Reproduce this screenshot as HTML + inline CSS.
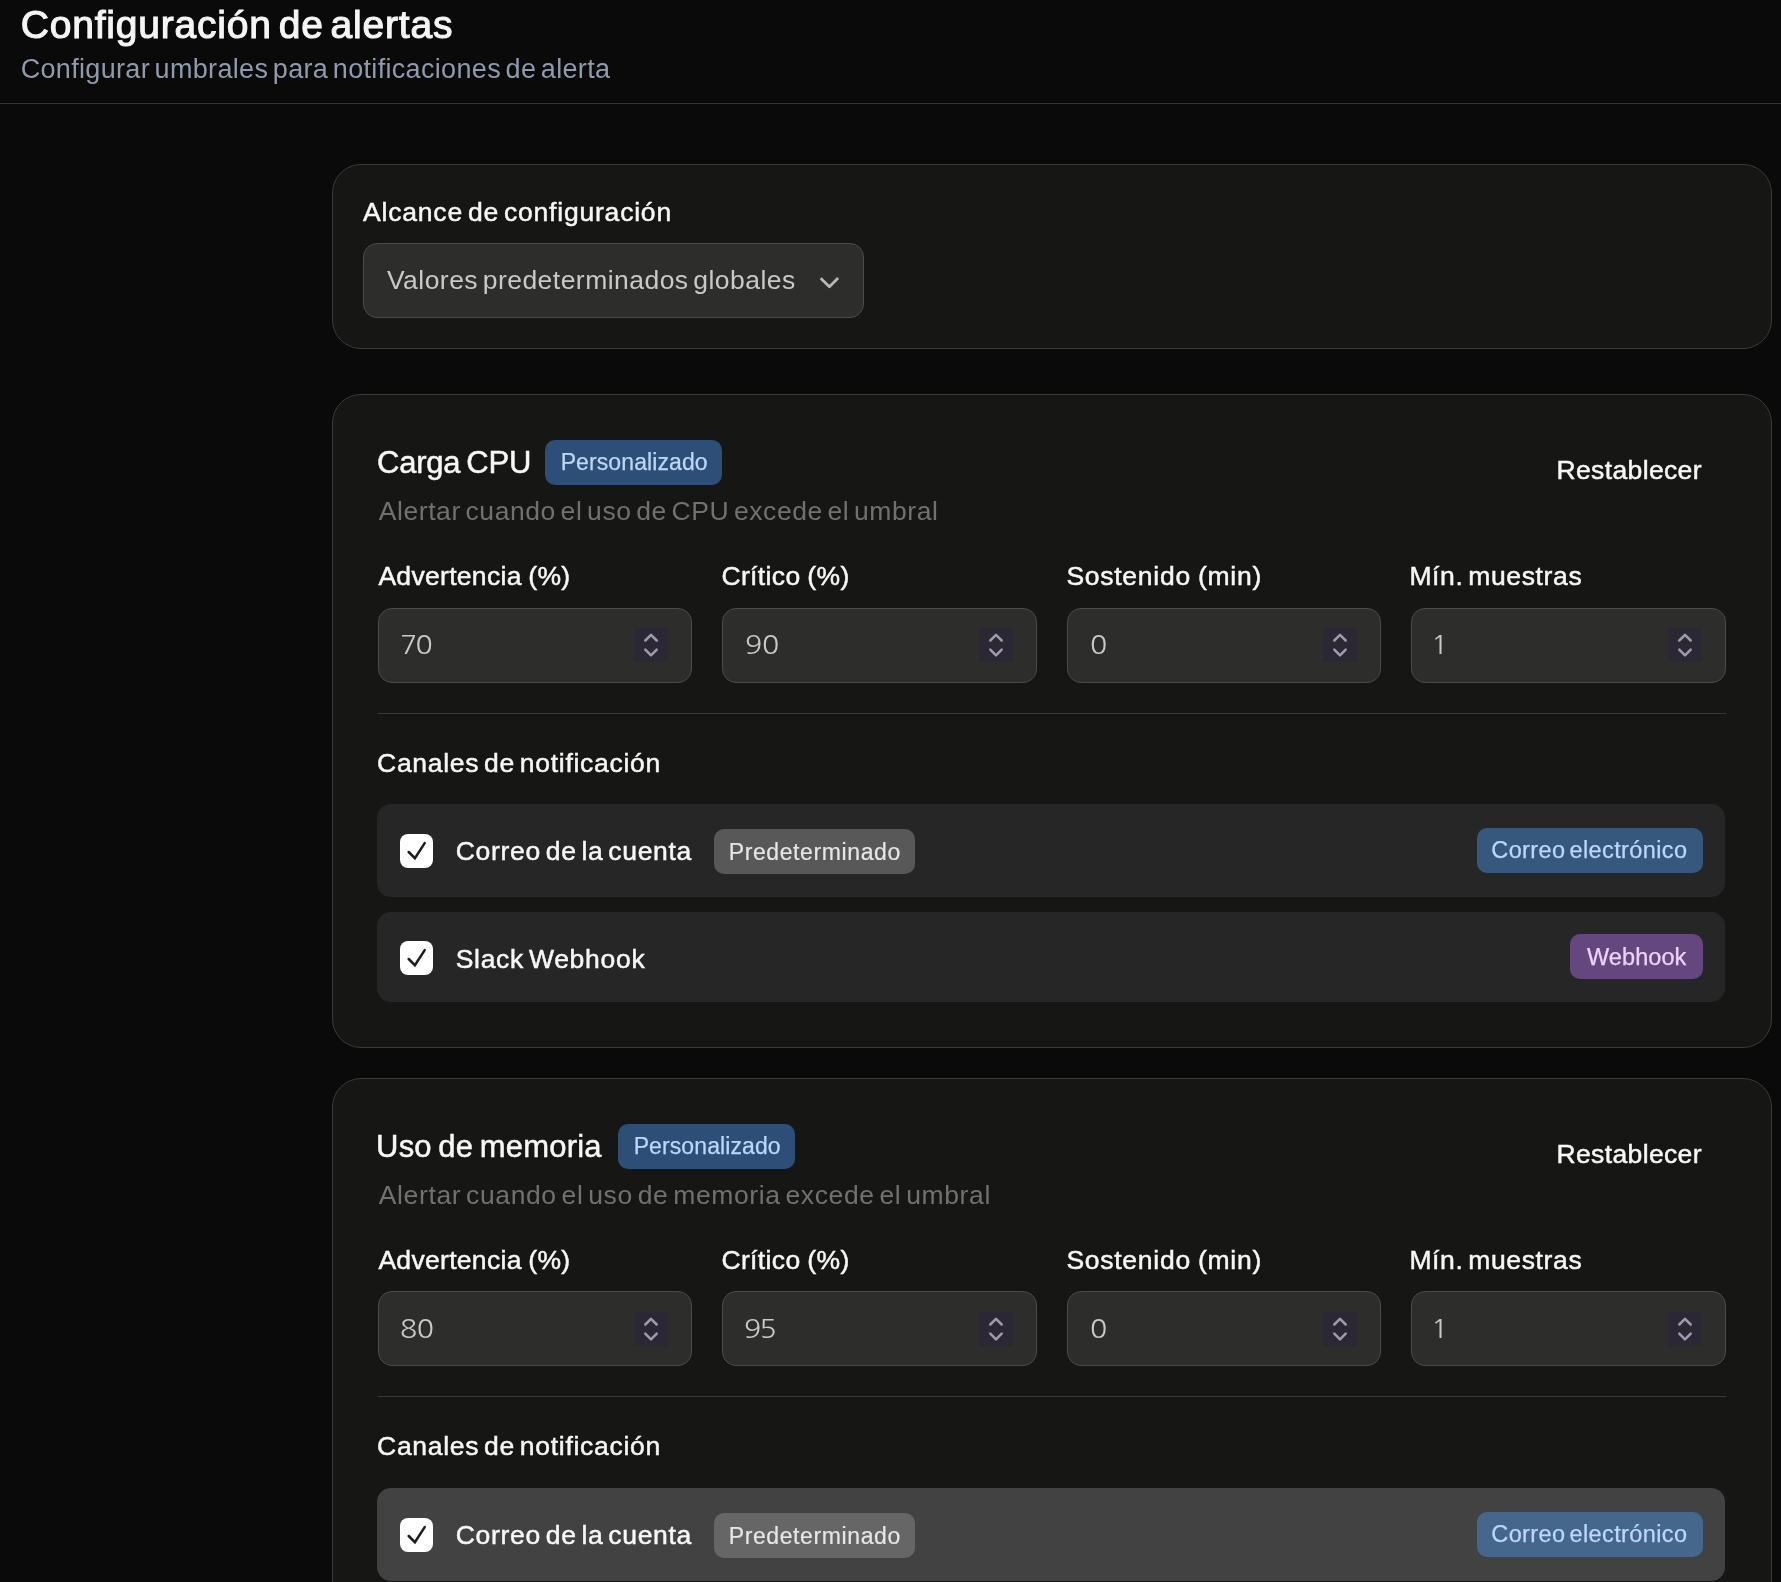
<!DOCTYPE html><html lang="es"><head><meta charset="utf-8"><title>Configuración de alertas</title><style>
*{box-sizing:border-box;margin:0;padding:0}
html,body{width:1781px;height:1582px;overflow:hidden;background:#0a0a0a;font-family:"Liberation Sans", sans-serif;}
body{position:relative}
#app{left:0;top:0;width:1781px;height:1582px;will-change:transform;overflow:hidden}
.t{position:absolute;display:block;line-height:1;white-space:nowrap;font-weight:normal;font-style:normal}
div{position:absolute}
.hdr{left:0;top:0;width:1781px;height:104px;border-bottom:1px solid #333332;background:#0a0a0a}
.card{background:#161614;border:1px solid #3a3a36;border-radius:29px}
.field{background:#2d2d2b;border:1px solid #4b4b49;border-radius:14px}
.spin{background:#2b2833}
.hr{height:1px;background:#393937}
.row{background:#262626;border-radius:14px}
.row.hov{background:#424242}
.cb{background:#ffffff;border-radius:8px}
.bdg{border-radius:10px}
svg{position:absolute;overflow:visible;left:0;top:0}
</style></head><body><div id="app">
<div class="hdr"></div>
<h1 class="t" style="left:20.70px;top:5.30px;font-size:39px;color:#f5f5f5;letter-spacing:0.800px;word-spacing:-4.68px;-webkit-text-stroke:1.1px #f5f5f5;">Configuración de alertas</h1>
<p class="t" style="left:20.70px;top:55.80px;font-size:27px;color:#8f9aac;letter-spacing:0.327px;word-spacing:-3.24px;">Configurar umbrales para notificaciones de alerta</p>
<div class="card" style="left:332px;top:164px;width:1440px;height:185px;"></div>
<label class="t" style="left:363.10px;top:199.05px;font-size:26.5px;color:#f7f7f7;letter-spacing:0.795px;word-spacing:-3.18px;-webkit-text-stroke:0.5px #f7f7f7;">Alcance de configuración</label>
<div class="field" style="left:363px;top:243px;width:501px;height:75px;"></div>
<span class="t" style="left:386.90px;top:267.05px;font-size:26.5px;color:#c9c9c7;letter-spacing:0.468px;word-spacing:-3.18px;">Valores predeterminados globales</span>
<svg width="1781" height="400"><path d="M820.7 278.2 L829.4 286.7 L838.1 278.0" fill="none" stroke="#b9b9b7" stroke-width="2.7" stroke-linejoin="round"/></svg>
<div class="card" style="left:332px;top:394px;width:1440px;height:654px;"></div><h2 class="t" style="left:377.10px;top:447.30px;font-size:31px;color:#f7f7f7;letter-spacing:-0.267px;word-spacing:-2.17px;-webkit-text-stroke:0.5px #f7f7f7;">Carga CPU</h2><div class="bdg" style="left:545px;top:440px;width:177px;height:45px;background:#2d4e76"></div><span class="t" style="left:560.70px;top:450.80px;font-size:23px;color:#bcd7fb;letter-spacing:0.094px;-webkit-text-stroke:0.25px #bcd7fb;">Personalizado</span><p class="t" style="left:378.80px;top:498.05px;font-size:26.5px;color:#717170;letter-spacing:0.563px;word-spacing:-3.18px;">Alertar cuando el uso de CPU excede el umbral</p><span class="t" style="left:1556.50px;top:457.05px;font-size:26.5px;color:#f7f7f7;letter-spacing:0.362px;-webkit-text-stroke:0.5px #f7f7f7;">Restablecer</span><label class="t" style="left:378.40px;top:563.05px;font-size:26.5px;color:#f7f7f7;letter-spacing:0.305px;word-spacing:-1.06px;-webkit-text-stroke:0.5px #f7f7f7;">Advertencia (%)</label><div class="field" style="left:378px;top:608px;width:314px;height:75px;"></div><span class="t" style="left:399.74px;top:634.05px;font-size:24.5px;color:#c9c9c7;letter-spacing:-1.500px;transform:scaleX(1.16);transform-origin:0 0;font-family:'NanumGothic',sans-serif;">70</span><div class="spin" style="left:634.2px;top:628px;width:34px;height:34px;"></div><svg width="1781" height="1582"><path d="M645.3 640.5 L651.0 634.8 L656.7 640.5 M645.3 649.6 L651.0 655.3 L656.7 649.6" fill="none" stroke="#9d9bb0" stroke-width="2.5" stroke-linecap="round" stroke-linejoin="round"/></svg><label class="t" style="left:721.40px;top:563.05px;font-size:26.5px;color:#f7f7f7;letter-spacing:0.375px;word-spacing:-1.06px;-webkit-text-stroke:0.5px #f7f7f7;">Crítico (%)</label><div class="field" style="left:722px;top:608px;width:315px;height:75px;"></div><span class="t" style="left:744.54px;top:634.05px;font-size:24.5px;color:#c9c9c7;letter-spacing:-0.261px;transform:scaleX(1.16);transform-origin:0 0;font-family:'NanumGothic',sans-serif;">90</span><div class="spin" style="left:979.2px;top:628px;width:34px;height:34px;"></div><svg width="1781" height="1582"><path d="M990.3 640.5 L996.0 634.8 L1001.7 640.5 M990.3 649.6 L996.0 655.3 L1001.7 649.6" fill="none" stroke="#9d9bb0" stroke-width="2.5" stroke-linecap="round" stroke-linejoin="round"/></svg><label class="t" style="left:1066.40px;top:563.05px;font-size:26.5px;color:#f7f7f7;letter-spacing:0.736px;word-spacing:-1.06px;-webkit-text-stroke:0.5px #f7f7f7;">Sostenido (min)</label><div class="field" style="left:1067px;top:608px;width:314px;height:75px;"></div><span class="t" style="left:1089.75px;top:634.05px;font-size:24.5px;color:#c9c9c7;transform:scaleX(1.16);transform-origin:0 0;font-family:'NanumGothic',sans-serif;">0</span><div class="spin" style="left:1323.2px;top:628px;width:34px;height:34px;"></div><svg width="1781" height="1582"><path d="M1334.3 640.5 L1340.0 634.8 L1345.7 640.5 M1334.3 649.6 L1340.0 655.3 L1345.7 649.6" fill="none" stroke="#9d9bb0" stroke-width="2.5" stroke-linecap="round" stroke-linejoin="round"/></svg><label class="t" style="left:1409.40px;top:563.05px;font-size:26.5px;color:#f7f7f7;letter-spacing:0.629px;word-spacing:-3.18px;-webkit-text-stroke:0.5px #f7f7f7;">Mín. muestras</label><div class="field" style="left:1411px;top:608px;width:315px;height:75px;"></div><span class="t" style="left:1431.31px;top:634.05px;font-size:24.5px;color:#c9c9c7;transform:scaleX(1.16);transform-origin:0 0;font-family:'NanumGothic',sans-serif;">1</span><div class="spin" style="left:1668.2px;top:628px;width:34px;height:34px;"></div><svg width="1781" height="1582"><path d="M1679.3 640.5 L1685.0 634.8 L1690.7 640.5 M1679.3 649.6 L1685.0 655.3 L1690.7 649.6" fill="none" stroke="#9d9bb0" stroke-width="2.5" stroke-linecap="round" stroke-linejoin="round"/></svg><div class="hr" style="left:378px;top:713px;width:1348px;height:1px;"></div><h3 class="t" style="left:377.10px;top:750.05px;font-size:26.5px;color:#f7f7f7;letter-spacing:0.700px;word-spacing:-3.18px;-webkit-text-stroke:0.5px #f7f7f7;">Canales de notificación</h3><div class="row" style="left:377px;top:804px;width:1348px;height:93px;"></div><div class="cb" style="left:400px;top:834px;width:33px;height:34px;"></div><svg width="1781" height="1582"><path d="M408.7 852.0 L414.9 858.2 L424.7 843.1" fill="none" stroke="#1c1c1c" stroke-width="2.5" stroke-linecap="round" stroke-linejoin="miter"/></svg><span class="t" style="left:455.70px;top:838.05px;font-size:26.5px;color:#f7f7f7;letter-spacing:0.690px;word-spacing:-3.18px;-webkit-text-stroke:0.5px #f7f7f7;">Correo de la cuenta</span><div class="bdg" style="left:714px;top:829px;width:201px;height:45px;background:#585858"></div><span class="t" style="left:728.70px;top:840.80px;font-size:23px;color:#e6e6e6;letter-spacing:0.611px;-webkit-text-stroke:0.2px #e6e6e6;">Predeterminado</span><div class="bdg" style="left:1477px;top:828px;width:226px;height:45px;background:#37587d"></div><span class="t" style="left:1491.30px;top:838.55px;font-size:23.5px;color:#bcd7fb;letter-spacing:0.387px;word-spacing:-2.82px;-webkit-text-stroke:0.25px #bcd7fb;">Correo electrónico</span><div class="row" style="left:377px;top:912px;width:1348px;height:90px;"></div><div class="cb" style="left:400px;top:941px;width:33px;height:34px;"></div><svg width="1781" height="1582"><path d="M408.7 959.0 L414.9 965.2 L424.7 950.1" fill="none" stroke="#1c1c1c" stroke-width="2.5" stroke-linecap="round" stroke-linejoin="miter"/></svg><span class="t" style="left:455.70px;top:946.05px;font-size:26.5px;color:#f7f7f7;letter-spacing:0.708px;word-spacing:-3.18px;-webkit-text-stroke:0.5px #f7f7f7;">Slack Webhook</span><div class="bdg" style="left:1570px;top:934px;width:133px;height:45px;background:#64477e"></div><span class="t" style="left:1587.00px;top:945.55px;font-size:23.5px;color:#efd2fb;letter-spacing:0.083px;-webkit-text-stroke:0.25px #efd2fb;">Webhook</span>
<div class="card" style="left:332px;top:1078px;width:1440px;height:654px;"></div><h2 class="t" style="left:376.10px;top:1131.30px;font-size:31px;color:#f7f7f7;letter-spacing:0.174px;word-spacing:-2.17px;-webkit-text-stroke:0.5px #f7f7f7;">Uso de memoria</h2><div class="bdg" style="left:618px;top:1124px;width:177px;height:45px;background:#2d4e76"></div><span class="t" style="left:633.70px;top:1134.80px;font-size:23px;color:#bcd7fb;letter-spacing:0.094px;-webkit-text-stroke:0.25px #bcd7fb;">Personalizado</span><p class="t" style="left:378.80px;top:1182.05px;font-size:26.5px;color:#717170;letter-spacing:0.626px;word-spacing:-3.18px;">Alertar cuando el uso de memoria excede el umbral</p><span class="t" style="left:1556.50px;top:1141.05px;font-size:26.5px;color:#f7f7f7;letter-spacing:0.362px;-webkit-text-stroke:0.5px #f7f7f7;">Restablecer</span><label class="t" style="left:378.40px;top:1247.05px;font-size:26.5px;color:#f7f7f7;letter-spacing:0.305px;word-spacing:-1.06px;-webkit-text-stroke:0.5px #f7f7f7;">Advertencia (%)</label><div class="field" style="left:378px;top:1291px;width:314px;height:75px;"></div><span class="t" style="left:400.04px;top:1318.05px;font-size:24.5px;color:#c9c9c7;letter-spacing:-0.347px;transform:scaleX(1.16);transform-origin:0 0;font-family:'NanumGothic',sans-serif;">80</span><div class="spin" style="left:634.2px;top:1312px;width:34px;height:34px;"></div><svg width="1781" height="1582"><path d="M645.3 1324.5 L651.0 1318.8 L656.7 1324.5 M645.3 1333.6 L651.0 1339.3 L656.7 1333.6" fill="none" stroke="#9d9bb0" stroke-width="2.5" stroke-linecap="round" stroke-linejoin="round"/></svg><label class="t" style="left:721.40px;top:1247.05px;font-size:26.5px;color:#f7f7f7;letter-spacing:0.375px;word-spacing:-1.06px;-webkit-text-stroke:0.5px #f7f7f7;">Crítico (%)</label><div class="field" style="left:722px;top:1291px;width:315px;height:75px;"></div><span class="t" style="left:744.44px;top:1318.05px;font-size:24.5px;color:#c9c9c7;letter-spacing:-1.500px;transform:scaleX(1.16);transform-origin:0 0;font-family:'NanumGothic',sans-serif;">95</span><div class="spin" style="left:979.2px;top:1312px;width:34px;height:34px;"></div><svg width="1781" height="1582"><path d="M990.3 1324.5 L996.0 1318.8 L1001.7 1324.5 M990.3 1333.6 L996.0 1339.3 L1001.7 1333.6" fill="none" stroke="#9d9bb0" stroke-width="2.5" stroke-linecap="round" stroke-linejoin="round"/></svg><label class="t" style="left:1066.40px;top:1247.05px;font-size:26.5px;color:#f7f7f7;letter-spacing:0.736px;word-spacing:-1.06px;-webkit-text-stroke:0.5px #f7f7f7;">Sostenido (min)</label><div class="field" style="left:1067px;top:1291px;width:314px;height:75px;"></div><span class="t" style="left:1089.75px;top:1318.05px;font-size:24.5px;color:#c9c9c7;transform:scaleX(1.16);transform-origin:0 0;font-family:'NanumGothic',sans-serif;">0</span><div class="spin" style="left:1323.2px;top:1312px;width:34px;height:34px;"></div><svg width="1781" height="1582"><path d="M1334.3 1324.5 L1340.0 1318.8 L1345.7 1324.5 M1334.3 1333.6 L1340.0 1339.3 L1345.7 1333.6" fill="none" stroke="#9d9bb0" stroke-width="2.5" stroke-linecap="round" stroke-linejoin="round"/></svg><label class="t" style="left:1409.40px;top:1247.05px;font-size:26.5px;color:#f7f7f7;letter-spacing:0.629px;word-spacing:-3.18px;-webkit-text-stroke:0.5px #f7f7f7;">Mín. muestras</label><div class="field" style="left:1411px;top:1291px;width:315px;height:75px;"></div><span class="t" style="left:1431.31px;top:1318.05px;font-size:24.5px;color:#c9c9c7;transform:scaleX(1.16);transform-origin:0 0;font-family:'NanumGothic',sans-serif;">1</span><div class="spin" style="left:1668.2px;top:1312px;width:34px;height:34px;"></div><svg width="1781" height="1582"><path d="M1679.3 1324.5 L1685.0 1318.8 L1690.7 1324.5 M1679.3 1333.6 L1685.0 1339.3 L1690.7 1333.6" fill="none" stroke="#9d9bb0" stroke-width="2.5" stroke-linecap="round" stroke-linejoin="round"/></svg><div class="hr" style="left:378px;top:1396px;width:1348px;height:1px;"></div><h3 class="t" style="left:377.10px;top:1433.05px;font-size:26.5px;color:#f7f7f7;letter-spacing:0.700px;word-spacing:-3.18px;-webkit-text-stroke:0.5px #f7f7f7;">Canales de notificación</h3><div class="row hov" style="left:377px;top:1488px;width:1348px;height:93px;"></div><div class="cb" style="left:400px;top:1518px;width:33px;height:34px;"></div><svg width="1781" height="1582"><path d="M408.7 1536.0 L414.9 1542.2 L424.7 1527.1" fill="none" stroke="#1c1c1c" stroke-width="2.5" stroke-linecap="round" stroke-linejoin="miter"/></svg><span class="t" style="left:455.70px;top:1522.05px;font-size:26.5px;color:#f7f7f7;letter-spacing:0.690px;word-spacing:-3.18px;-webkit-text-stroke:0.5px #f7f7f7;">Correo de la cuenta</span><div class="bdg" style="left:714px;top:1513px;width:201px;height:45px;background:#666666"></div><span class="t" style="left:728.70px;top:1524.80px;font-size:23px;color:#e6e6e6;letter-spacing:0.611px;-webkit-text-stroke:0.2px #e6e6e6;">Predeterminado</span><div class="bdg" style="left:1477px;top:1512px;width:226px;height:45px;background:#46678c"></div><span class="t" style="left:1491.30px;top:1522.55px;font-size:23.5px;color:#bcd7fb;letter-spacing:0.387px;word-spacing:-2.82px;-webkit-text-stroke:0.25px #bcd7fb;">Correo electrónico</span>
</div></body></html>
